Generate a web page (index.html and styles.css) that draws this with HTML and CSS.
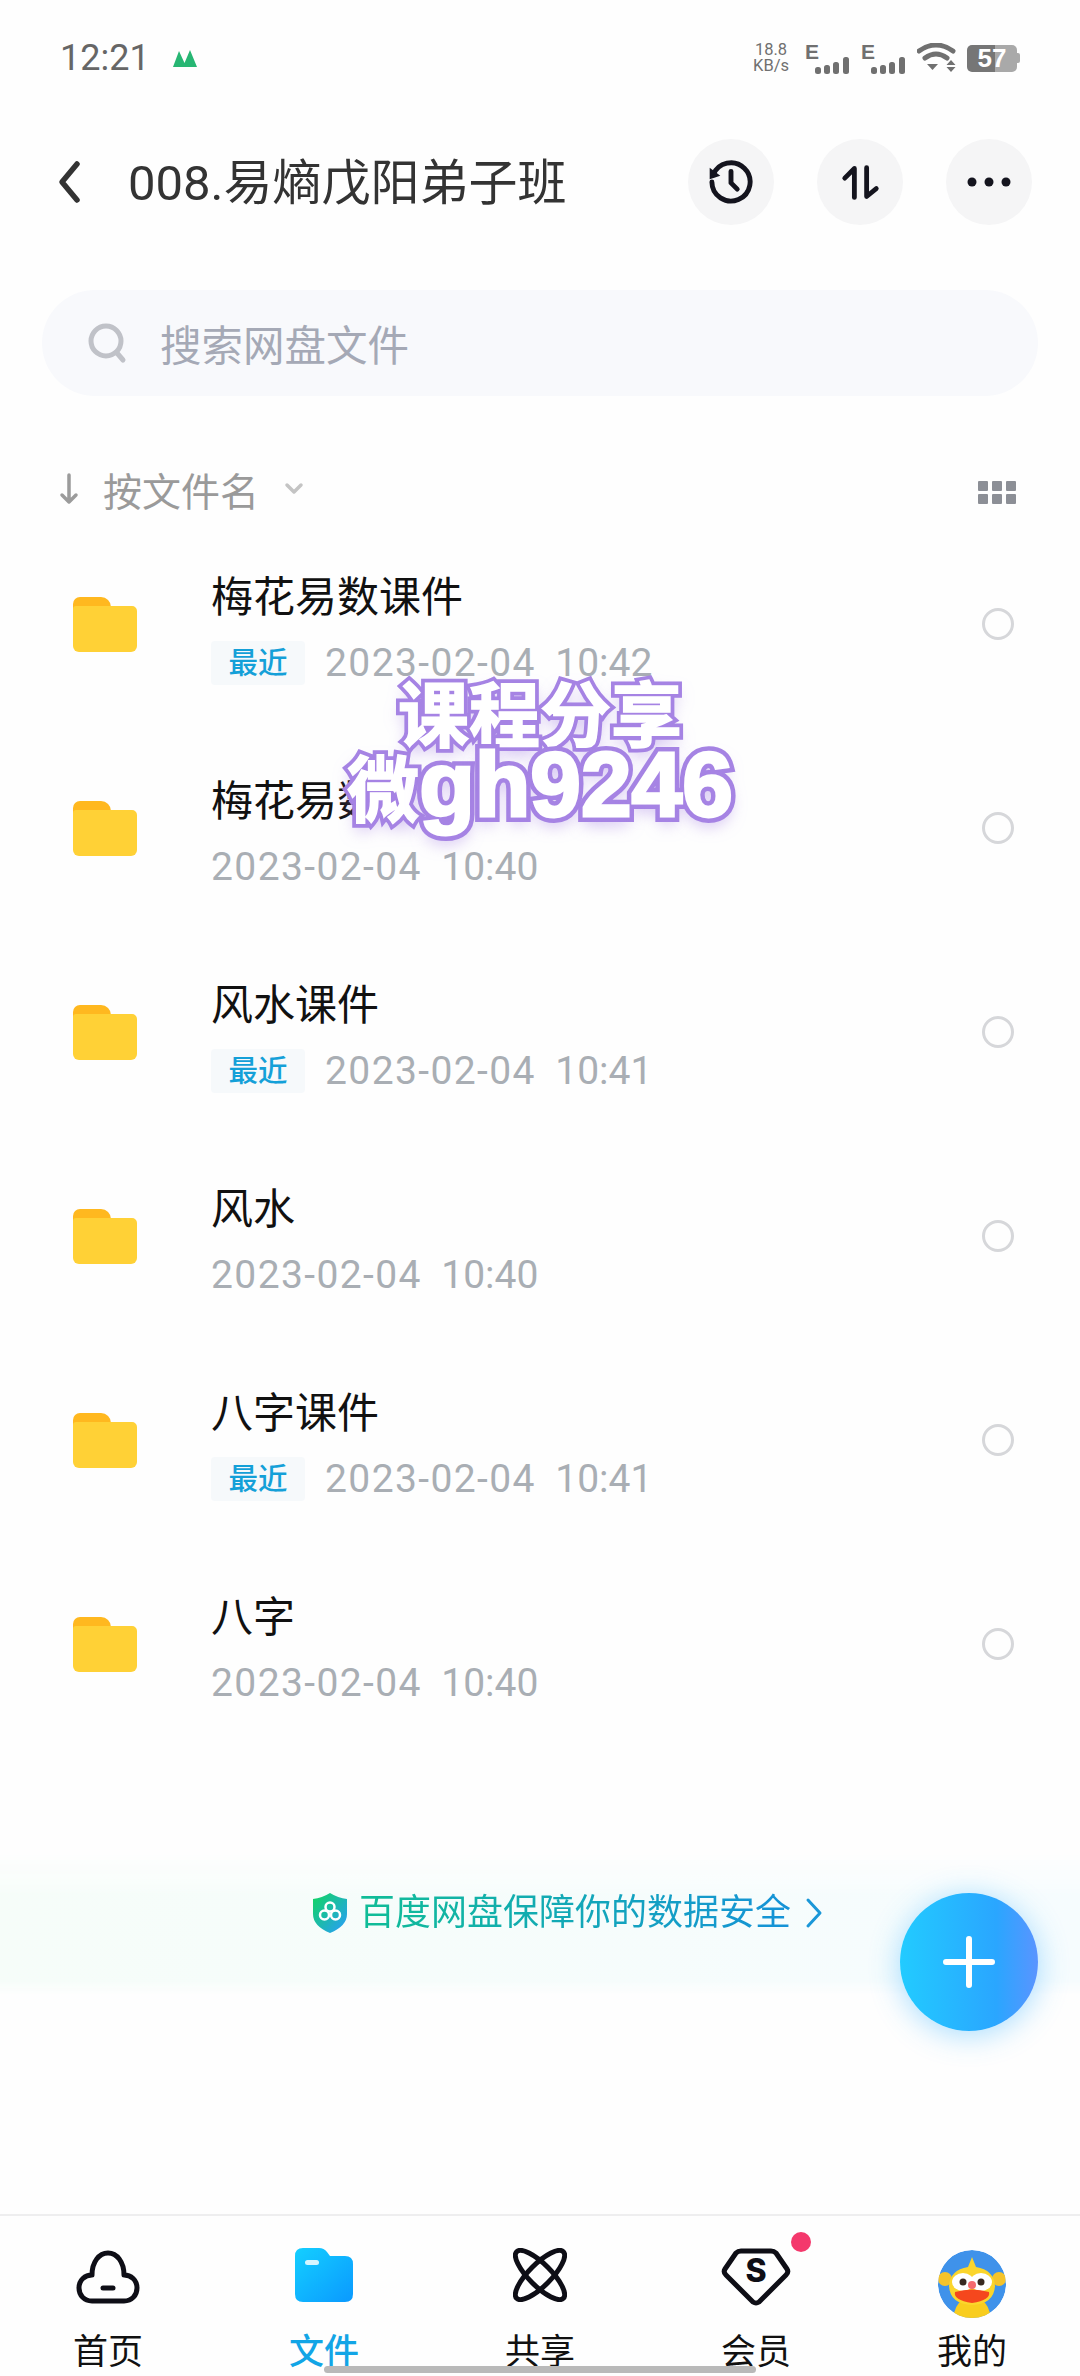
FILE: index.html
```html
<!DOCTYPE html>
<html lang="zh">

<head>
    <meta charset="UTF-8">
    <meta name="viewport" content="width=device-width, initial-scale=1.0">
    <title>008.易熵戊阳弟子班</title>
    <link rel="stylesheet" href="styles.css">
</head>
<body>
    <div class="page">
        <div class="status">
            <div class="status-left">
                <span class="time">12:21</span>
                <svg class="mountain" width="24" height="17" viewBox="0 0 24 17">
                    <path d="M0 17 L6 1 L11.500 13 L17 0 L24 17 Z" fill="#27b673"/>
                </svg>
            </div>
            <div class="status-right">
                <div class="speed"><span>18.8</span><span>KB/s</span></div>
                <svg class="signal" width="46" height="40" viewBox="0 0 46 40">
                    <text x="0" y="21" class="signal-e">E</text>
                    <rect x="10" y="29" width="6" height="7" rx="2.500"/>
                    <rect x="19" y="27" width="6" height="9" rx="2.500"/>
                    <rect x="28" y="24" width="6" height="12" rx="2.500"/>
                    <rect x="38" y="19" width="6" height="17" rx="2.500"/>
                </svg>
                <svg class="signal" width="46" height="40" viewBox="0 0 46 40">
                    <text x="0" y="21" class="signal-e">E</text>
                    <rect x="10" y="29" width="6" height="7" rx="2.500"/>
                    <rect x="19" y="27" width="6" height="9" rx="2.500"/>
                    <rect x="28" y="24" width="6" height="12" rx="2.500"/>
                    <rect x="38" y="19" width="6" height="17" rx="2.500"/>
                </svg>
                <svg class="wifi" width="40" height="30" viewBox="0 0 40 30">
                    <path d="M2 8 Q19 -4 36 8" class="wifi-arc"/>
                    <path d="M8 15 Q19 7 30 15" class="wifi-arc"/>
                    <path d="M14 24 L25 24 L19.500 30 Z" fill="#707070" transform="translate(-4 -3)"/>
                    <path d="M31 17 L35.500 22 L26.500 22 Z M26.500 24 L35.500 24 L31 29 Z" fill="#707070" transform="translate(3 0)"/>
                </svg>
                <div class="battery">
                    <div class="battery-body"><span>57</span></div>
                    <div class="battery-tip"></div>
                </div>
            </div>
        </div>

        <div class="header">
            <svg class="back" width="24" height="44" viewBox="0 0 24 44">
                <path d="M20 4 L5 22 L20 40" fill="none" stroke="#333" stroke-width="5.500" stroke-linecap="round" stroke-linejoin="round"/>
            </svg>
            <h1 class="title">008.易熵戊阳弟子班</h1>
            <div class="actions">
                <div class="round-btn">
                    <svg width="48" height="48" viewBox="0 0 54 54">
                        <path d="M7 19 A21.500 21.500 0 1 1 5.500 27" fill="none" stroke="#14141e" stroke-width="5.500" stroke-linecap="round"/>
                        <path d="M3 11 L15 20 L3 24 Z" fill="#14141e"/>
                        <path d="M27 15 V28 L34 35" fill="none" stroke="#14141e" stroke-width="5.500" stroke-linecap="round" stroke-linejoin="round"/>
                    </svg>
                </div>
                <div class="round-btn">
                    <svg width="39" height="35" viewBox="0 0 44 40">
                        <path d="M15 37 V4 L4 15" fill="none" stroke="#14141e" stroke-width="5.500" stroke-linecap="round" stroke-linejoin="round"/>
                        <path d="M29 3 V36 L40 27" fill="none" stroke="#14141e" stroke-width="5.500" stroke-linecap="round" stroke-linejoin="round"/>
                    </svg>
                </div>
                <div class="round-btn">
                    <svg width="44" height="12" viewBox="0 0 44 12">
                        <circle cx="5" cy="6" r="4.500" fill="#14141e"/>
                        <circle cx="22" cy="6" r="4.500" fill="#14141e"/>
                        <circle cx="39" cy="6" r="4.500" fill="#14141e"/>
                    </svg>
                </div>
            </div>
        </div>

        <div class="search">
            <svg width="42" height="42" viewBox="0 0 42 42">
                <circle cx="19" cy="19" r="15" fill="none" stroke="#c0c2c8" stroke-width="5"/>
                <path d="M30 31 L36 38" stroke="#c0c2c8" stroke-width="5" stroke-linecap="round"/>
            </svg>
            <span>搜索网盘文件</span>
        </div>

        <div class="sort">
            <div class="sort-left">
                <svg width="20" height="32" viewBox="0 0 20 32">
                    <path d="M10 2 V29 M3 22 L10 29 L17 22" fill="none" stroke="#9b9b9b" stroke-width="3.500" stroke-linecap="round" stroke-linejoin="round"/>
                </svg>
                <span class="sort-name">按文件名</span>
                <svg width="20" height="14" viewBox="0 0 20 14">
                    <path d="M3 3 L10 10 L17 3" fill="none" stroke="#c4c4c4" stroke-width="3.500" stroke-linecap="round" stroke-linejoin="round"/>
                </svg>
            </div>
            <div class="grid-icon">
                <i></i><i></i><i></i><i></i><i></i><i></i>
            </div>
        </div>

        <div class="list">
            <div class="row">
                <div class="folder"><div class="folder-tab"></div><div class="folder-body"></div></div>
                <div class="info">
                    <div class="name">梅花易数课件</div>
                    <div class="meta"><span class="tag">最近</span><span class="date"><span class="day">2023-02-04</span>  10:42</span></div>
                </div>
                <div class="radio"></div>
            </div>
            <div class="row">
                <div class="folder"><div class="folder-tab"></div><div class="folder-body"></div></div>
                <div class="info">
                    <div class="name">梅花易数</div>
                    <div class="meta"><span class="date"><span class="day">2023-02-04</span>  10:40</span></div>
                </div>
                <div class="radio"></div>
            </div>
            <div class="row">
                <div class="folder"><div class="folder-tab"></div><div class="folder-body"></div></div>
                <div class="info">
                    <div class="name">风水课件</div>
                    <div class="meta"><span class="tag">最近</span><span class="date"><span class="day">2023-02-04</span>  10:41</span></div>
                </div>
                <div class="radio"></div>
            </div>
            <div class="row">
                <div class="folder"><div class="folder-tab"></div><div class="folder-body"></div></div>
                <div class="info">
                    <div class="name">风水</div>
                    <div class="meta"><span class="date"><span class="day">2023-02-04</span>  10:40</span></div>
                </div>
                <div class="radio"></div>
            </div>
            <div class="row">
                <div class="folder"><div class="folder-tab"></div><div class="folder-body"></div></div>
                <div class="info">
                    <div class="name">八字课件</div>
                    <div class="meta"><span class="tag">最近</span><span class="date"><span class="day">2023-02-04</span>  10:41</span></div>
                </div>
                <div class="radio"></div>
            </div>
            <div class="row">
                <div class="folder"><div class="folder-tab"></div><div class="folder-body"></div></div>
                <div class="info">
                    <div class="name">八字</div>
                    <div class="meta"><span class="date"><span class="day">2023-02-04</span>  10:40</span></div>
                </div>
                <div class="radio"></div>
            </div>
        </div>

        <div class="promo">
            <svg class="shield" width="36" height="42" viewBox="0 0 36 42">
                <defs>
                    <linearGradient id="shieldFill" x1="0" y1="0" x2="1" y2="1">
                        <stop offset="0" stop-color="#10d65e"/>
                        <stop offset="1" stop-color="#2a9cff"/>
                    </linearGradient>
                </defs>
                <path d="M18 1 Q26 6 35 7 V22 Q35 34 18 41 Q1 34 1 22 V7 Q10 6 18 1 Z" fill="url(#shieldFill)"/>
                <circle cx="18" cy="15" r="4.500" fill="none" stroke="#fff" stroke-width="2.500"/>
                <circle cx="12.500" cy="23" r="4.500" fill="none" stroke="#fff" stroke-width="2.500"/>
                <circle cx="23.500" cy="23" r="4.500" fill="none" stroke="#fff" stroke-width="2.500"/>
            </svg>
            <span class="promo-text">百度网盘保障你的数据安全</span>
            <svg width="18" height="32" viewBox="0 0 18 32">
                <path d="M3 3 L15 16 L3 29" fill="none" stroke="#1b97d8" stroke-width="3" stroke-linecap="round" stroke-linejoin="round"/>
            </svg>
        </div>

        <div class="nav">
            <div class="nav-item">
                <div class="nav-icon home-icon">
                    <svg width="64" height="54" viewBox="0 0 64 54">
                        <path d="M16 51 H48 C56 51 61 45 61 38 C61 30 55 25 48 25 C48 12 41 3 32 3 C23 3 16 12 16 25 C9 25 3 30 3 38 C3 45 8 51 16 51 Z" fill="none" stroke="#0e0e16" stroke-width="5" stroke-linejoin="round"/>
                        <path d="M27 38 H37" stroke="#0e0e16" stroke-width="5" stroke-linecap="round"/>
                    </svg>
                </div>
                <span>首页</span>
            </div>
            <div class="nav-item active">
                <div class="nav-icon">
                    <svg width="58" height="54" viewBox="0 0 58 54">
                        <defs>
                            <linearGradient id="navFolder" x1="0" y1="0" x2="1" y2="1">
                                <stop offset="0" stop-color="#14cfff"/>
                                <stop offset="1" stop-color="#0a99ff"/>
                            </linearGradient>
                        </defs>
                        <path d="M8 0 H24 Q29 0 32 4 L35 8 H50 Q58 8 58 16 V46 Q58 54 50 54 H8 Q0 54 0 46 V8 Q0 0 8 0 Z" fill="url(#navFolder)"/>
                        <rect x="10" y="12" width="14" height="5" rx="2.500" fill="#d6f5ff"/>
                    </svg>
                </div>
                <span>文件</span>
            </div>
            <div class="nav-item">
                <div class="nav-icon">
                    <svg width="54" height="54" viewBox="0 0 54 54">
                        <ellipse cx="27" cy="27" rx="11" ry="33" transform="rotate(45 27 27)" fill="none" stroke="#0e0e16" stroke-width="5"/>
                        <ellipse cx="27" cy="27" rx="11" ry="33" transform="rotate(-45 27 27)" fill="none" stroke="#0e0e16" stroke-width="5"/>
                    </svg>
                </div>
                <span>共享</span>
            </div>
            <div class="nav-item">
                <div class="nav-icon">
                    <svg width="70" height="58" viewBox="0 0 70 58">
                        <path d="M20 3 H50 Q53 3 55 5 L66 21 Q68 24 65 27 L38 54 Q35 56 32 54 L5 27 Q2 24 4 21 L15 5 Q17 3 20 3 Z" fill="none" stroke="#0e0e16" stroke-width="5" stroke-linejoin="round"/>
                        <text x="35" y="34" class="vip-s">S</text>
                    </svg>
                    <div class="dot"></div>
                </div>
                <span>会员</span>
            </div>
            <div class="nav-item">
                <div class="nav-icon avatar-icon">
                    <svg width="68" height="68" viewBox="0 0 68 68">
                        <defs>
                            <clipPath id="avatarClip"><circle cx="34" cy="34" r="34"/></clipPath>
                        </defs>
                        <g clip-path="url(#avatarClip)">
                            <circle cx="34" cy="34" r="34" fill="#3f92ea"/>
                            <path d="M15 70 Q16 56 24 50 H44 Q52 56 53 70 Z" fill="#f9cd1e"/>
                            <circle cx="7" cy="29" r="7" fill="#f5c32a"/>
                            <circle cx="61" cy="29" r="7" fill="#f5c32a"/>
                            <path d="M34 7 L38 17 Q56 20 57 36 Q56 54 34 55 Q12 54 11 36 Q12 20 30 17 Z" fill="#fbd52c"/>
                            <ellipse cx="25" cy="32" rx="11" ry="9" fill="#fff"/>
                            <ellipse cx="43" cy="32" rx="11" ry="9" fill="#fff"/>
                            <circle cx="25" cy="32" r="3.500" fill="#3a2a20"/>
                            <circle cx="43" cy="32" r="3.500" fill="#3a2a20"/>
                            <circle cx="34" cy="35" r="4" fill="#f56a6e"/>
                            <path d="M17 42 Q34 37 51 42 Q53 50 34 53 Q15 50 17 42 Z" fill="#f5471d"/>
                        </g>
                    </svg>
                </div>
                <span>我的</span>
            </div>
        </div>

        <div class="fab">
            <svg width="52" height="52" viewBox="0 0 52 52">
                <path d="M26 3 V49 M3 26 H49" stroke="#fff" stroke-width="6" stroke-linecap="round"/>
            </svg>
        </div>

        <div class="watermark">
            <div class="wm-top"><span class="wm-text wm-cjk" data-text="课程分享">课程分享</span></div>
            <div class="wm-bottom"><span class="wm-text wm-cjk" data-text="微">微</span><span class="wm-text" data-text="gh9246">gh9246</span></div>
        </div>

        <div class="home-bar"></div>
    </div>
</body>

</html>
```

FILE: styles.css
```css
* {
    box-sizing: border-box;
}

body {
    font-family: Roboto, "Noto Sans CJK SC", sans-serif;
    background-color: #fefefe;
    margin: 0;
    padding: 0;
}

.page {
    position: relative;
    display: flex;
    flex-direction: column;
    width: 1080px;
    height: 2376px;
    overflow: hidden;
    background-color: #fefefe;
}

/* status bar */
.status {
    display: flex;
    align-items: center;
    justify-content: space-between;
    height: 116px;
    padding: 0 60px;
    flex-shrink: 0;
}

.status-left {
    display: flex;
    align-items: center;
    gap: 23px;
}

.time {
    font-size: 36px;
    color: #666;
}

.status-right {
    display: flex;
    align-items: center;
    gap: 10px;
}

.speed {
    display: flex;
    flex-direction: column;
    align-items: center;
    font-size: 16.500px;
    line-height: 16px;
    color: #707070;
    margin-right: 6px;
}

.signal rect {
    fill: #707070;
}

.signal-e {
    font-family: "Liberation Sans", sans-serif;
    font-size: 21px;
    font-weight: bold;
    fill: #707070;
}

.wifi-arc {
    fill: none;
    stroke: #707070;
    stroke-width: 5;
    stroke-linecap: round;
}

.battery {
    display: flex;
    align-items: center;
}

.battery-body {
    width: 50px;
    height: 27px;
    border-radius: 5px;
    background: linear-gradient(90deg, #767676 57%, #a9a9a9 57%);
    color: #fff;
    font-family: "Liberation Sans", sans-serif;
    font-size: 26px;
    font-weight: bold;
    line-height: 27px;
    text-align: center;
}

.battery-tip {
    width: 3px;
    height: 10px;
    background-color: #a9a9a9;
    border-radius: 0 2px 2px 0;
}

/* header */
.header {
    display: flex;
    align-items: center;
    height: 132px;
    padding: 0 48px 0 57px;
    flex-shrink: 0;
}

.title {
    margin: -8px 0 0 47px;
    font-size: 49px;
    font-weight: 400;
    color: #333;
}

.actions {
    display: flex;
    gap: 43px;
    margin-left: auto;
}

.round-btn {
    display: flex;
    align-items: center;
    justify-content: center;
    width: 86px;
    height: 86px;
    border-radius: 50%;
    background-color: #f5f5f6;
}

/* search */
.search {
    display: flex;
    align-items: center;
    gap: 31px;
    height: 106px;
    margin: 42px 42px 0;
    padding: 0 0 0 45px;
    border-radius: 53px;
    background-color: #f8f9fc;
    font-size: 41.500px;
    color: #a5a9b6;
    flex-shrink: 0;
}

/* sort row */
.sort {
    display: flex;
    align-items: center;
    justify-content: space-between;
    height: 52px;
    margin-top: 67px;
    padding: 0 64px 0 59px;
    flex-shrink: 0;
}

.sort-left {
    display: flex;
    align-items: center;
}

.sort-name {
    margin: 0 25px 0 24px;
    font-size: 39px;
    color: #9a9a9a;
}

.grid-icon {
    display: grid;
    grid-template-columns: repeat(3, 10px);
    gap: 3px 4px;
    margin-top: 6px;
}

.grid-icon i {
    height: 10px;
    background-color: #8c8f96;
    border-radius: 1px;
}

/* file list */
.list {
    margin-top: 7px;
    flex-shrink: 0;
}

.row {
    display: flex;
    align-items: center;
    height: 204px;
    padding: 0 66px 0 73px;
}

.folder {
    position: relative;
    width: 64px;
    height: 55px;
    margin-right: 74px;
}

.folder-tab {
    position: absolute;
    top: 0;
    left: 0;
    width: 38px;
    height: 24px;
    background-color: #ffb81f;
    border-radius: 7px 10px 0 0;
}

.folder-body {
    position: absolute;
    top: 9px;
    left: 0;
    width: 64px;
    height: 46px;
    background-color: #ffd136;
    border-radius: 3px 5px 6px 6px;
}

.info {
    flex: 1;
    display: flex;
    flex-direction: column;
    gap: 15px;
    margin-top: 7px;
}

.name {
    font-size: 42px;
    line-height: 56px;
    color: #111;
}

.meta {
    display: flex;
    align-items: center;
    height: 44px;
}

.tag {
    width: 94px;
    height: 44px;
    margin-right: 20px;
    border-radius: 4px;
    background-color: #f6f9fb;
    color: #14a0d8;
    font-size: 29.500px;
    font-weight: 500;
    line-height: 44px;
    text-align: center;
}

.date {
    font-size: 39px;
    color: #a9aeb4;
    white-space: pre;
}

.day {
    letter-spacing: 1.400px;
}

.radio {
    width: 32px;
    height: 32px;
    border: 3px solid #d6d7da;
    border-radius: 50%;
}

/* promo */
.promo {
    position: relative;
    isolation: isolate;
    display: flex;
    align-items: center;
    justify-content: center;
    gap: 14px;
    height: 142px;
    margin-top: 107px;
    padding: 0 0 22px 55px;
    flex-shrink: 0;
}

.promo::before {
    content: "";
    position: absolute;
    inset: 0;
    z-index: -1;
    background: linear-gradient(90deg, #f6fdf9, #f6fcfe);
    -webkit-mask-image: linear-gradient(180deg, transparent, #000 30%, #000 90%, transparent);
    mask-image: linear-gradient(180deg, transparent, #000 30%, #000 90%, transparent);
}

.shield {
    margin-right: -3px;
}

.promo-text {
    font-size: 36px;
    line-height: 44px;
    color: #12a9ae;
    background: linear-gradient(90deg, #10bd96, #1592d8);
    background-clip: text;
    -webkit-background-clip: text;
    -webkit-text-fill-color: transparent;
}

/* bottom nav */
.nav {
    display: flex;
    height: 162px;
    margin-top: auto;
    border-top: 2px solid #eeeeef;
    flex-shrink: 0;
}

.nav-item {
    flex: 1;
    display: flex;
    flex-direction: column;
    align-items: center;
    font-size: 35px;
    color: #111;
}

.nav-item span {
    line-height: 44px;
}

.nav-item.active {
    color: #12a5e6;
    font-weight: 500;
}

.nav-icon {
    position: relative;
    display: flex;
    align-items: flex-start;
    justify-content: center;
    height: 115px;
    padding-top: 32px;
}

.home-icon,
.avatar-icon {
    padding-top: 34px;
}

.vip-s {
    font-family: Inter, sans-serif;
    font-size: 32px;
    font-weight: 800;
    text-anchor: middle;
    fill: #0e0e16;
}

.dot {
    position: absolute;
    top: 16px;
    left: 70px;
    width: 20px;
    height: 20px;
    border-radius: 50%;
    background-color: #f4386c;
}

/* overlays */
.fab {
    position: absolute;
    left: 900px;
    top: 1893px;
    display: flex;
    align-items: center;
    justify-content: center;
    width: 138px;
    height: 138px;
    border-radius: 50%;
    background: linear-gradient(90deg, #22cbff, #2aa6ff 70%, #5a94ff);
    box-shadow: 0 4px 30px rgba(60, 180, 255, 0.45);
}

.watermark {
    position: absolute;
    left: 280px;
    top: 669px;
    width: 520px;
    text-align: center;
    color: #fff;
}

.wm-top {
    font-size: 71px;
    line-height: 82px;
}

.wm-bottom {
    font-family: "Liberation Sans", sans-serif;
    font-size: 91px;
    font-weight: 700;
    line-height: 54px;
    white-space: nowrap;
}

/* purple outline underneath, a thin white stroke on top to fatten the letters */
.wm-text {
    position: relative;
    display: inline-block;
    -webkit-text-stroke: 12px #a684e4;
    paint-order: stroke fill;
    text-shadow: 0 8px 16px rgba(166, 132, 228, 0.6);
}

.wm-text::after {
    content: attr(data-text);
    position: absolute;
    left: 0;
    top: 0;
    -webkit-text-stroke: 3px #fff;
    text-shadow: none;
}

.wm-bottom .wm-cjk {
    font-size: 72px;
}

.wm-cjk {
    font-family: "Noto Sans CJK SC", sans-serif;
    font-weight: 700;
    -webkit-text-stroke-width: 9px;
}

.wm-cjk::after {
    -webkit-text-stroke-width: 1.500px;
}

.home-bar {
    position: absolute;
    left: 324px;
    top: 2366px;
    width: 432px;
    height: 7px;
    border-radius: 4px;
    background-color: #b9b9b9;
}
```
